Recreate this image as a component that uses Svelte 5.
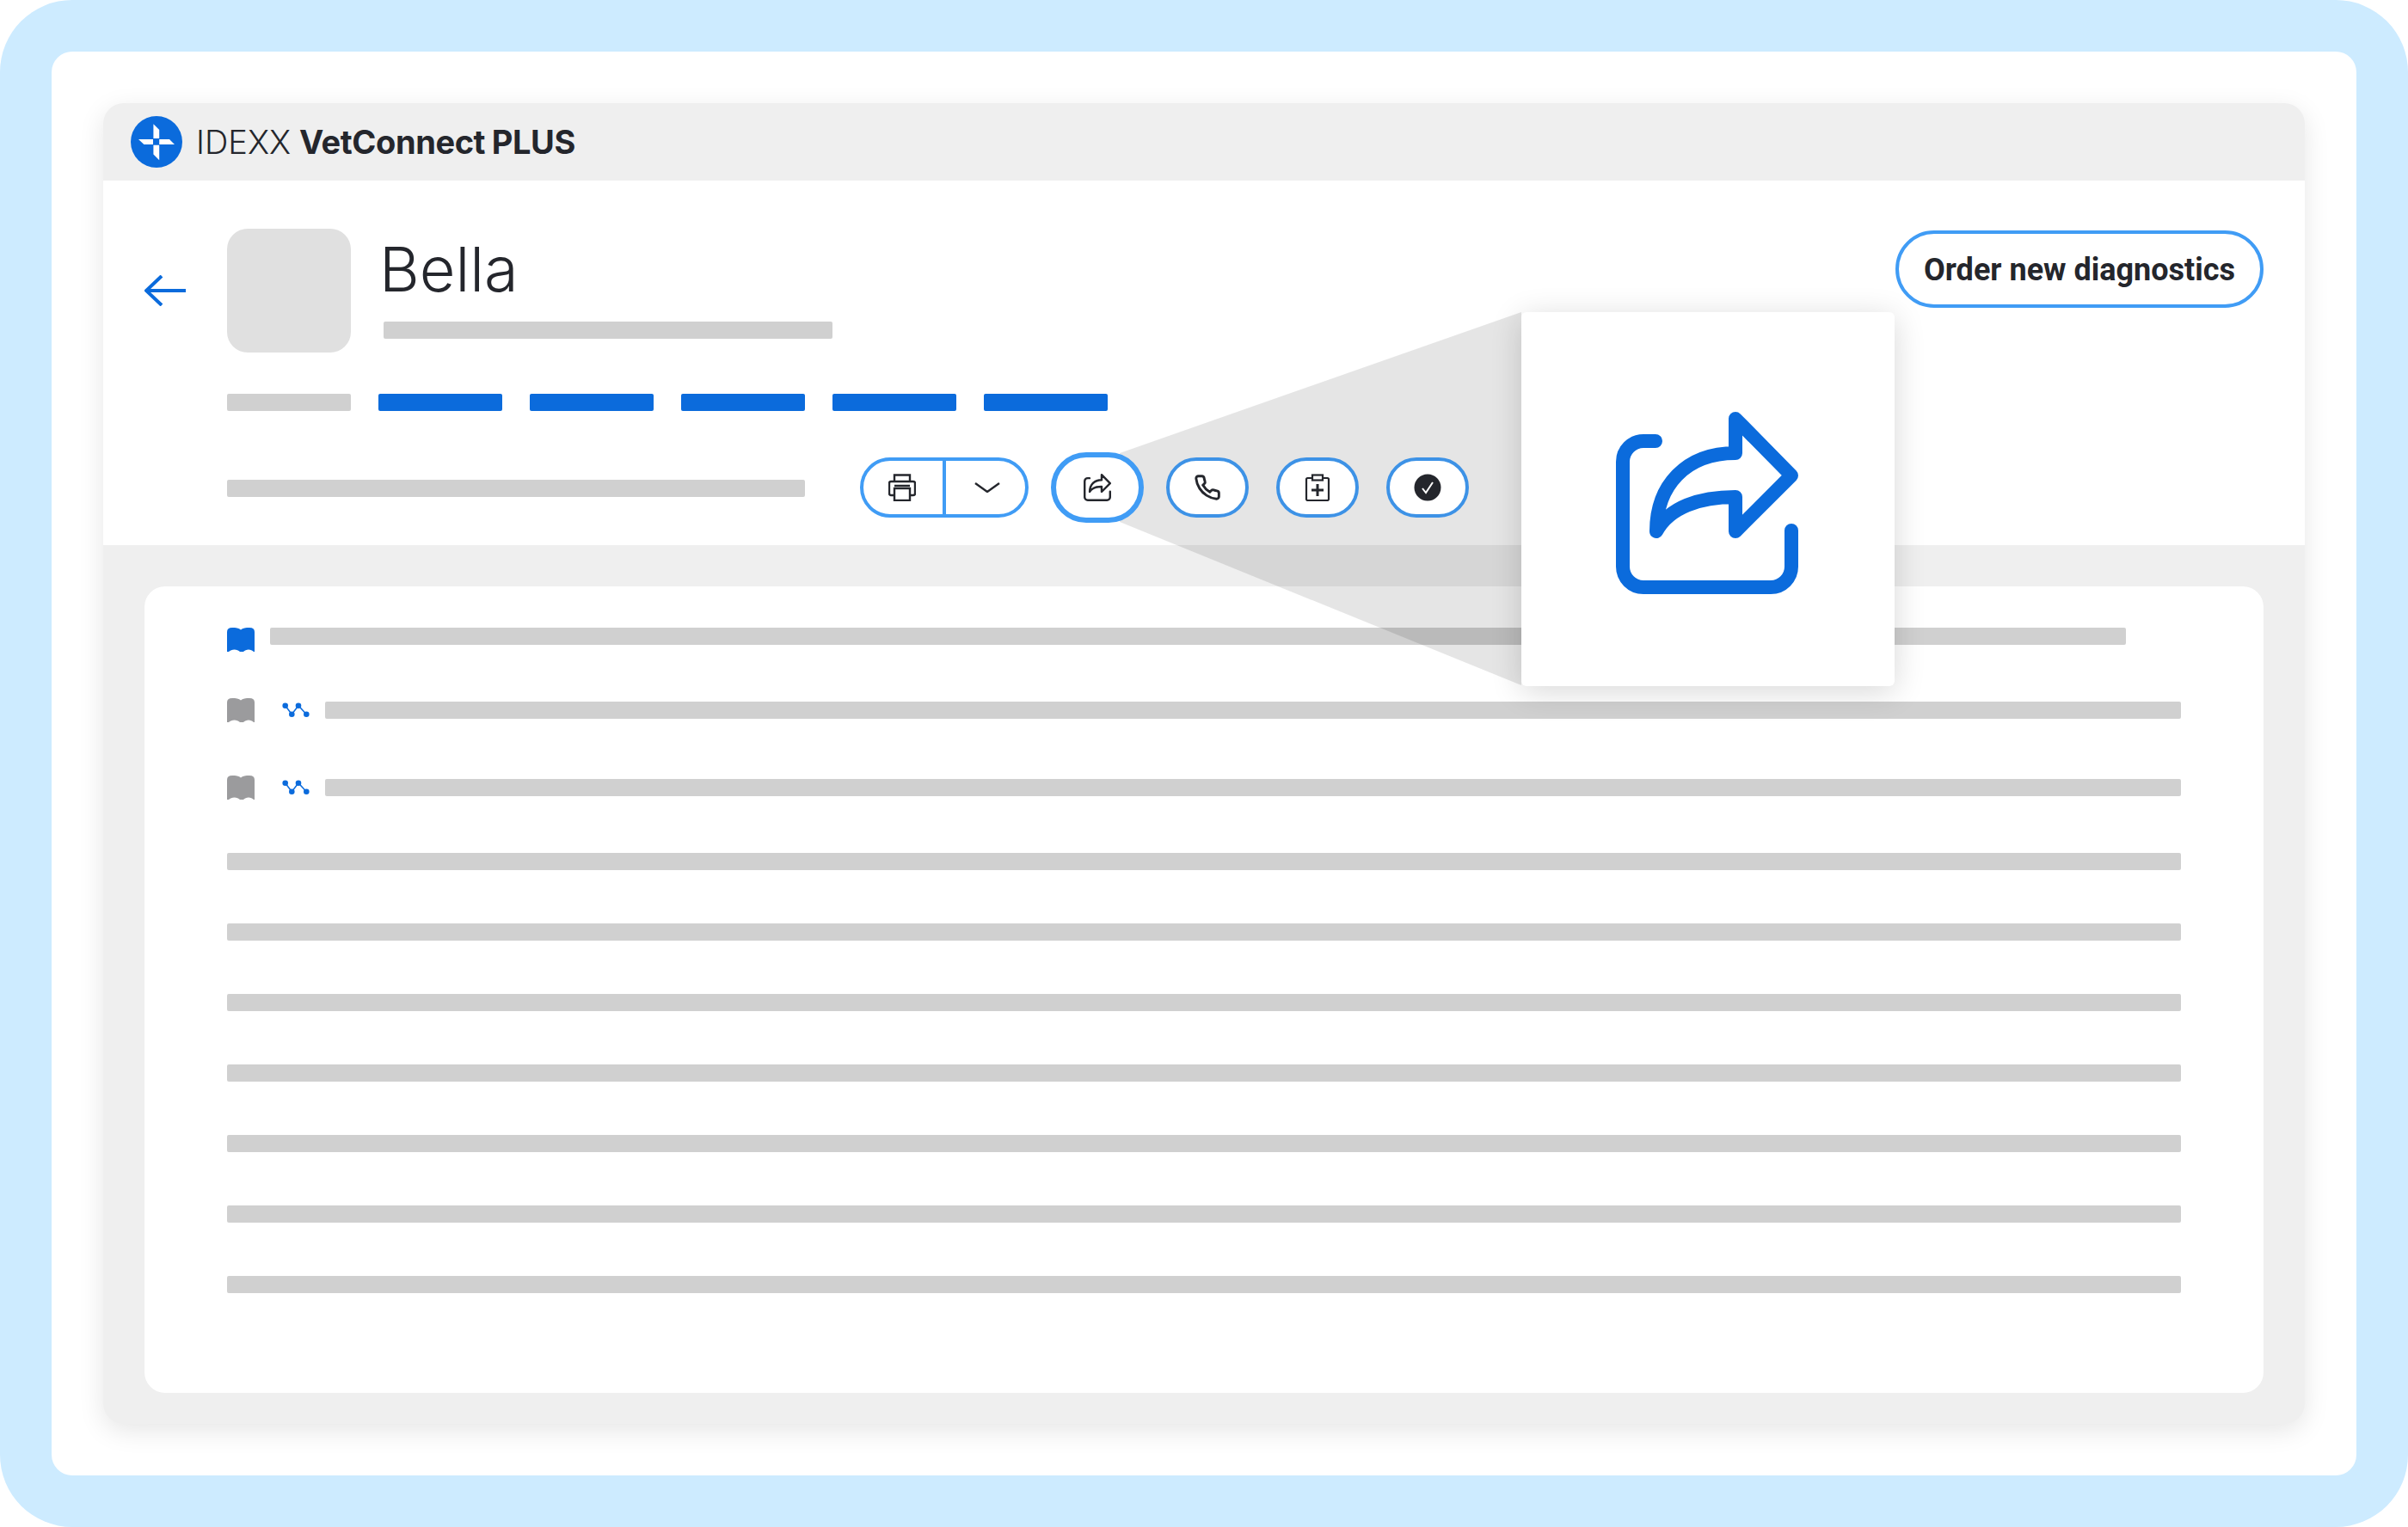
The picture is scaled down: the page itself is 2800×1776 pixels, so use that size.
<script>
  const tabs = [1, 2, 3, 4, 5];
  const lines = [1, 2, 3, 4, 5, 6, 7];
</script>

{#snippet book(cls)}
  <svg class="book {cls}" viewBox="0 0 32 28">
    <path d="M0 5Q0 0 6 0C10 0 14 .6 16 2.4 18 .6 22 0 26 0Q32 0 32 5V28H31C28 24.6 22 24.6 19 28H15C12 24.6 5 24.6 2 28H0Z" />
  </svg>
{/snippet}

{#snippet trend()}
  <svg class="trend" viewBox="0 0 32 18">
    <path class="trend-line" d="M3.7 3.7 11.3 13.7 19 3.7 28.3 13.7" />
    <circle cx="3.7" cy="3.7" r="3.3" />
    <circle cx="11.3" cy="13.7" r="3.3" />
    <circle cx="19" cy="3.7" r="3.3" />
    <circle cx="28.3" cy="13.7" r="3.3" />
  </svg>
{/snippet}

{#snippet shareIcon(cls)}
  <svg class={cls} viewBox="0 0 212 212" fill="none">
    <path d="M46 34H32A24 24 0 0 0 8 58V180A24 24 0 0 0 32 204H180A24 24 0 0 0 204 180V138" />
    <path d="M139 8 204 74 139 139V99C97 99 62 111 47 139 47 86 81 48 139 48Z" />
  </svg>
{/snippet}

<div class="frame">
  <div class="sheet">
    <div class="card">
      <header class="brandbar">
        <svg class="logo" viewBox="0 0 60 60">
          <circle cx="30" cy="30" r="30" fill="#0b6bdc" />
          <path fill="#fff" d="M26.4 9.3 33.2 16V26H26.4ZM51 33 45 27H33.2V33ZM33.2 51.3 26.4 44.6V33.7H33.2ZM9 27 15.4 33H26V27Z" />
        </svg>
        <span class="brand"><span class="light">IDEXX</span> <b>VetConnect PLUS</b></span>
      </header>

      <section class="patient">
        <div class="head">
          <svg class="back" viewBox="0 0 48 36" fill="none">
            <path d="M48 18H2M20 1 2 18 20 35" />
          </svg>
          <div class="avatar"></div>
          <div class="who">
            <h1>Bella</h1>
            <div class="bar sub"></div>
          </div>
          <button class="order">Order new diagnostics</button>
        </div>

        <div class="tabs">
          <div class="bar tab"></div>
          {#each tabs as t}
            <div class="bar tab blue"></div>
          {/each}
        </div>

        <div class="actions">
          <div class="bar meta"></div>
          <div class="btn split">
            <span class="half">
              <svg class="ic" viewBox="0 0 32 32" fill="none">
                <path d="M7 9V1.5H25V9M7 25H3A2 2 0 0 1 1 23V11A2 2 0 0 1 3 9H29A2 2 0 0 1 31 11V23A2 2 0 0 1 29 25H25M7 14H25" />
                <rect x="7" y="17" width="18" height="14" />
              </svg>
            </span>
            <span class="half right">
              <svg class="chev" viewBox="0 0 30 12" fill="none"><path d="M1 1 15 11 29 1" /></svg>
            </span>
          </div>
          <div class="btn share">{@render shareIcon('ic')}</div>
          <div class="btn round">
            <svg class="ic" viewBox="0 0 24 24" fill="none">
              <path d="M22 16.92v3a2 2 0 0 1-2.18 2 19.79 19.79 0 0 1-8.63-3.07 19.5 19.5 0 0 1-6-6 19.79 19.79 0 0 1-3.07-8.67A2 2 0 0 1 4.11 2h3a2 2 0 0 1 2 1.72 12.84 12.84 0 0 0 .7 2.81 2 2 0 0 1-.45 2.11L8.09 9.91a16 16 0 0 0 6 6l1.27-1.27a2 2 0 0 1 2.11-.45 12.84 12.84 0 0 0 2.81.7A2 2 0 0 1 22 16.92z" />
            </svg>
          </div>
          <div class="btn round">
            <svg class="ic" viewBox="0 0 32 32" fill="none">
              <path d="M10 5H4.500A1.500 1.500 0 0 0 3 6.500V29.500A1.500 1.500 0 0 0 4.500 31H27.500A1.500 1.500 0 0 0 29 29.500V6.500A1.500 1.500 0 0 0 27.500 5H22" />
              <rect x="10" y="1.500" width="12" height="6" />
              <path class="plus" d="M16 12V26M9 19H23" />
            </svg>
          </div>
          <div class="btn round">
            <svg class="ic" viewBox="0 0 32 32" fill="none">
              <circle class="solid" cx="16" cy="16" r="15.500" />
              <path class="tick" d="M10 17 14 22 22 10" />
            </svg>
          </div>
        </div>
      </section>

      <section class="content">
        <div class="panel">
          <div class="row first">
            {@render book('on')}
            <div class="bar grow short"></div>
          </div>
          <div class="row">
            {@render book('off')}
            {@render trend()}
            <div class="bar grow"></div>
          </div>
          <div class="row">
            {@render book('off')}
            {@render trend()}
            <div class="bar grow"></div>
          </div>
          {#each lines as l}
            <div class="bar"></div>
          {/each}
        </div>
      </section>
    </div>
  </div>

  <!-- zoom callout over the page -->
  <svg class="beam" viewBox="0 0 2800 1776">
    <path d="M1302 527 1769 363V797L1302 607Z" />
  </svg>
  <div class="popup">{@render shareIcon('big')}</div>
</div>

<style>
  :global(body) {
    background: #fff;
  }

  .frame {
    position: relative;
    box-sizing: border-box;
    width: 2800px;
    height: 1776px;
    padding: 60px;
    background: #cdebff;
    border-radius: 84px;
    color: #24262c;
    font-family: Inter, "Liberation Sans", sans-serif;
  }

  .sheet {
    box-sizing: border-box;
    height: 100%;
    padding: 60px;
    background: #fff;
    border-radius: 24px;
  }

  .card {
    display: flex;
    flex-direction: column;
    height: 100%;
    background: #efefef;
    border-radius: 24px;
    box-shadow: 0 8px 30px rgba(0, 0, 0, 0.1);
  }

  .brandbar {
    display: flex;
    align-items: center;
    gap: 16px;
    height: 90px;
    padding-left: 32px;
  }

  .logo {
    width: 60px;
    height: 60px;
  }

  .brand {
    margin-top: -1px;
    font-size: 38px;
    line-height: 40px;
    word-spacing: -1px;
  }

  .brand .light {
    font-weight: 300;
  }

  .brand b {
    font-weight: 700;
    letter-spacing: -0.4px;
  }

  .patient {
    box-sizing: border-box;
    height: 424px;
    padding: 56px 48px 0;
    background: #fff;
  }

  .head {
    display: flex;
    align-items: flex-start;
  }

  .back {
    width: 48px;
    height: 36px;
    margin: 54px 48px 0 0;
    stroke: #0b6bdc;
    stroke-width: 4;
  }

  .avatar {
    width: 144px;
    height: 144px;
    background: #e0e0e0;
    border-radius: 24px;
  }

  .who {
    margin-left: 38px;
  }

  h1 {
    height: 108px;
    margin: 0 0 0 -5px;
    font-size: 72px;
    font-weight: 300;
    line-height: 94px;
  }

  .bar {
    height: 20px;
    background: #d0d0d0;
    border-radius: 2px;
  }

  .bar.sub {
    width: 522px;
  }

  .order {
    box-sizing: border-box;
    width: 428px;
    height: 90px;
    margin: 2px 0 0 auto;
    padding: 2px 0 0;
    background: #fff;
    border: 4px solid #409cf5;
    border-radius: 45px;
    color: #24262c;
    font-family: Roboto, sans-serif;
    font-size: 36px;
    font-weight: 700;
  }

  .tabs {
    display: flex;
    gap: 32px;
    margin: 48px 0 0 96px;
  }

  .tab {
    width: 144px;
  }

  .tab.blue {
    background: #0b6bdc;
  }

  .actions {
    position: relative;
    z-index: 2;
    display: flex;
    align-items: center;
    height: 82px;
    margin: 48px 0 0 96px;
  }

  .meta {
    width: 672px;
    margin: 2px 64px 0 0;
  }

  .btn {
    box-sizing: border-box;
    display: flex;
    align-items: center;
    justify-content: center;
    background: #fff;
    border: 4px solid #409cf5;
    border-radius: 41px;
  }

  .split {
    width: 196px;
    height: 70px;
    margin-right: 26px;
    border-radius: 35px;
  }

  .half {
    display: flex;
    flex: 1;
    align-items: center;
    justify-content: center;
    height: 100%;
    padding-right: 3px;
  }

  .half.right {
    padding: 0 0 0 3px;
    border-left: 4px solid #409cf5;
  }

  .share {
    width: 108px;
    height: 82px;
    margin-right: 26px;
    border-width: 6px;
  }

  .round {
    width: 96px;
    height: 70px;
    margin-right: 32px;
    border-color: #3d92e6;
    border-radius: 35px;
  }

  .ic {
    width: 32px;
    height: 32px;
    stroke: #24262c;
    stroke-width: 2.4;
  }

  .share .ic {
    stroke-width: 16;
    stroke-linecap: round;
    stroke-linejoin: round;
  }

  .round .ic {
    stroke-width: 2.2;
  }

  .round .ic .plus {
    stroke-width: 3;
  }

  .chev {
    width: 30px;
    height: 12px;
    stroke: #24262c;
    stroke-width: 2.4;
  }

  .solid {
    fill: #24262c;
    stroke: none;
  }

  .round .ic .tick {
    stroke: #fff;
    stroke-width: 2;
  }

  .content {
    flex: 1;
    padding: 48px 48px 36px;
  }

  .panel {
    box-sizing: border-box;
    display: flex;
    flex-direction: column;
    gap: 62px;
    height: 100%;
    padding: 48px 96px 0;
    background: #fff;
    border-radius: 24px;
  }

  .row {
    display: flex;
    align-items: center;
    height: 28px;
  }

  .row.first {
    align-items: flex-start;
    margin-bottom: -8px;
  }

  .book {
    flex: none;
    width: 32px;
    height: 28px;
    margin-right: 32px;
  }

  .book.on {
    margin-right: 18px;
    fill: #0b6bdc;
  }

  .book.off {
    fill: #9b9b9d;
  }

  .trend {
    flex: none;
    width: 32px;
    height: 18px;
    margin-right: 18px;
    fill: #0b6bdc;
  }

  .trend-line {
    fill: none;
    stroke: #0b6bdc;
    stroke-width: 1.500;
  }

  .grow {
    flex: 1;
  }

  .short {
    margin-right: 64px;
  }

  .beam {
    position: absolute;
    inset: 0;
    width: 2800px;
    height: 1776px;
    pointer-events: none;
  }

  .beam path {
    fill: rgba(0, 0, 0, 0.1);
  }

  .popup {
    position: absolute;
    top: 363px;
    left: 1769px;
    display: flex;
    align-items: center;
    justify-content: center;
    width: 434px;
    height: 435px;
    background: #fff;
    border-radius: 6px;
    box-shadow: 0 6px 36px rgba(0, 0, 0, 0.16);
  }

  .big {
    width: 212px;
    height: 212px;
    margin: 9px 2px 0 0;
    stroke: #0b6bdc;
    stroke-width: 16;
    stroke-linecap: round;
    stroke-linejoin: round;
  }
</style>
